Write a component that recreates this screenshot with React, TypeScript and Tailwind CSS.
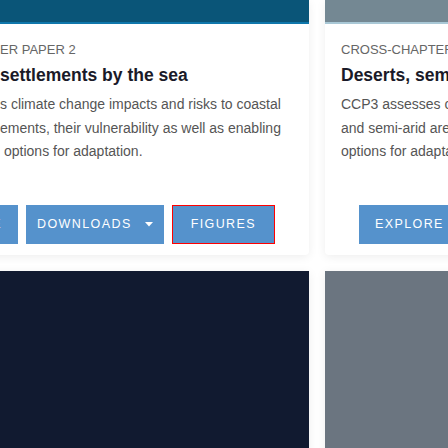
import React from "react";

function Caret() {
  return (
    <svg width="8" height="5" viewBox="0 0 8 5" className="ml-[13px]">
      <path d="M0 0 L8 0 L4 4.5 Z" fill="#ffffff" />
    </svg>
  );
}

const btn =
  "h-[39px] shrink-0 flex items-center bg-[#5592cc] text-white uppercase text-[12.5px] tracking-[1.4px] whitespace-nowrap";

export default function App() {
  return (
    <div className="w-[448px] h-[448px] overflow-hidden bg-white font-['Liberation_Sans',Arial,sans-serif]">
      <div className="flex gap-4 ml-[-16px]">
        {/* Left card */}
        <div className="w-[325px] shrink-0 bg-white rounded-b-[4px] shadow-[0_2px_10px_rgba(0,0,0,0.07)] overflow-hidden">
          <div className="h-[22px] bg-[#0a5578]" />
          <div className="h-[2px] bg-[#0f77ab]" />
          <div className="pl-4 pb-[11px]">
            <div className="mt-[18px] h-4 leading-4 text-[13px] text-[#666666] uppercase whitespace-nowrap">
              ER PAPER 2
            </div>
            <div className="mt-[5px] h-6 leading-6 text-[17.5px] font-bold text-[#1a1a28] whitespace-nowrap">
              settlements by the sea
            </div>
            <div className="mt-[6px] text-[14px] leading-[23.5px] text-[#555555] whitespace-nowrap">
              <div>s climate change impacts and risks to coastal</div>
              <div>ements, their vulnerability as well as enabling</div>
              <div className="pl-1">options for adaptation.</div>
            </div>
            <div className="mt-[41px] flex justify-end gap-2 pr-[34px]">
              <div className={btn + " pl-4 pr-[16px]"}>Explore</div>
              <div className={btn + " pl-[11px] pr-[11px]"}>
                Downloads
                <Caret />
              </div>
              <div className={btn + " px-[18px] border border-[#ff0000]"}>Figures</div>
            </div>
          </div>
        </div>
        {/* Right card */}
        <div className="w-[320px] shrink-0 bg-white rounded-b-[4px] shadow-[0_2px_10px_rgba(0,0,0,0.07)] overflow-hidden">
          <div className="h-[22px] bg-[#748893]" />
          <div className="h-[2px] bg-[#a9c8d6]" />
          <div className="pl-4 pb-[11px]">
            <div className="mt-[18px] h-4 leading-4 text-[13px] text-[#666666] uppercase whitespace-nowrap">
              Cross-Chapter Paper 3
            </div>
            <div className="mt-[5px] h-6 leading-6 text-[17.5px] font-bold text-[#1a1a28] whitespace-nowrap">
              Deserts, semi-arid areas and desertification
            </div>
            <div className="mt-[6px] text-[14px] leading-[23.5px] text-[#555555] whitespace-nowrap">
              <div>CCP3 assesses climate change impacts and risks in deserts</div>
              <div>and semi-arid areas, their vulnerability as well as enabling</div>
              <div>options for adaptation.</div>
            </div>
            <div className="mt-[41px] flex gap-2 pl-[18px]">
              <div className={btn + " pl-4 pr-[18px]"}>Explore</div>
              <div className={btn + " pl-[11px] pr-[11px]"}>
                Downloads
                <Caret />
              </div>
            </div>
          </div>
        </div>
      </div>
      <div className="flex gap-4 ml-[-16px] mt-4">
        <div className="w-[325px] h-[220px] shrink-0 bg-[#111a30] shadow-[0_2px_10px_rgba(0,0,0,0.07)]" />
        <div className="w-[320px] h-[220px] shrink-0 bg-[#6b7580] shadow-[0_2px_10px_rgba(0,0,0,0.07)]" />
      </div>
    </div>
  );
}
